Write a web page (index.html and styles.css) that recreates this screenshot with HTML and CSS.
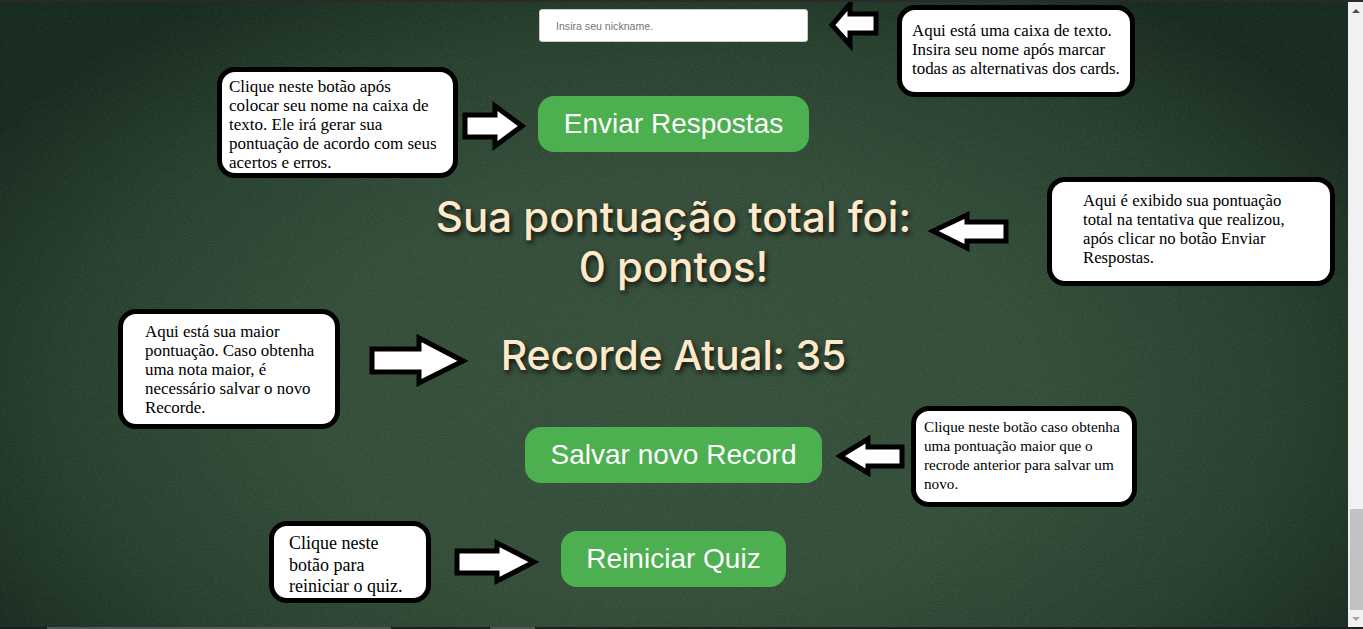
FILE: index.html
```html
<!DOCTYPE html>
<html>
<head>
	<title>Quiz - Pontuação</title>
	<link rel="stylesheet" href="styles.css">
</head>
<body>
	<div class="window">
		<main class="page">
			<svg class="grain" width="1348" height="627" aria-hidden="true">
				<filter id="noise">
					<feTurbulence type="fractalNoise" baseFrequency="0.9" numOctaves="2" seed="4"/>
					<feColorMatrix type="matrix" values="0 0 0 0 1  0 0 0 0 1  0 0 0 0 1  0.6 0.6 0 0 -0.5"/>
				</filter>
				<rect width="1348" height="627" filter="url(#noise)"/>
			</svg>

			<section class="quiz">
				<input class="nickname" type="text" placeholder="Insira seu nickname.">
				<button class="btn btn-send" type="button">Enviar Respostas</button>
				<h2 class="score">Sua pontuação total foi:<br>0 pontos!</h2>
				<h2 class="record">Recorde Atual: 35</h2>
				<button class="btn btn-save" type="button">Salvar novo Record</button>
				<button class="btn btn-restart" type="button">Reiniciar Quiz</button>
			</section>

			<!-- setas de ajuda -->
			<svg class="arrows" width="1348" height="627" aria-hidden="true">
				<polygon points="876,14 876,33 850,33 850,45 832,25 850,4 850,14"/>
				<polygon points="465,115 465,137 495,137 495,146 522,126 495,106 495,115"/>
				<polygon points="1006,222 1006,241 967,241 967,248 933,231 967,215 967,222"/>
				<polygon points="372,349 372,372 419,372 419,383 463,361 419,338 419,349"/>
				<polygon points="902,447 902,466 868,466 868,473 840,456 868,439 868,447"/>
				<polygon points="457,551 457,573 497,573 497,581 534,562 497,543 497,551"/>
			</svg>

			<!-- caixas de ajuda -->
			<p class="note note-input">Aqui está uma caixa de texto. Insira seu nome após marcar todas as alternativas dos cards.</p>
			<p class="note note-send">Clique neste botão após colocar seu nome na caixa de texto. Ele irá gerar sua pontuação de acordo com seus acertos e erros.</p>
			<p class="note note-score">Aqui é exibido sua pontuação total na tentativa que realizou, após clicar no botão Enviar Respostas.</p>
			<p class="note note-record">Aqui está sua maior pontuação. Caso obtenha uma nota maior, é necessário salvar o novo Recorde.</p>
			<p class="note note-save">Clique neste botão caso obtenha uma pontuação maior que o recrode anterior para salvar um novo.</p>
			<p class="note note-restart">Clique neste botão para reiniciar o quiz.</p>
		</main>

		<div class="scrollbar">
			<span class="scroll-up"></span>
			<span class="scroll-track"><span class="scroll-thumb"></span></span>
			<span class="scroll-down"></span>
		</div>
	</div>
	<div class="taskbar">
		<span class="taskbar-item taskbar-long"></span>
		<span class="taskbar-item taskbar-short"></span>
	</div>
</body>
</html>
```

FILE: styles.css
```css
html, body {
	margin: 0;
	height: 100%;
	overflow: hidden;
	background-color: #1e1e1e;
}

.window {
	position: relative;
	display: flex;
	height: 627px;
}

/* faixa escura no topo da captura */
.window::before {
	content: "";
	position: absolute;
	top: 0;
	left: 0;
	right: 0;
	height: 2px;
	background-color: #2a2a2a;
	z-index: 2;
}

.page {
	position: relative;
	flex: 1;
	overflow: hidden;
	background: radial-gradient(ellipse 60% 76% at 50% 62%, #364f3a 0%, #334c38 45%, #263f2c 75%, #16291d 100%);
}

.grain {
	position: absolute;
	top: 0;
	left: 0;
	opacity: 0.17;
}

.quiz {
	position: relative;
	display: flex;
	flex-direction: column;
	align-items: center;
	padding-top: 9px;
	padding-right: 1px;
}

.nickname {
	width: 269px;
	height: 33px;
	padding: 0 16px;
	box-sizing: border-box;
	background-color: #fff;
	border: 1px solid #ccc;
	border-radius: 3px;
	font-size: 10.6px;
	font-family: "Liberation Sans", Arial, sans-serif;
}

.nickname::placeholder {
	color: #757575;
}

.btn {
	height: 56px;
	padding: 0 26px;
	background-color: #4CAF50;
	color: #fff;
	border: none;
	border-radius: 16px;
	font-size: 28px;
	font-family: "Liberation Sans", Arial, sans-serif;
	cursor: pointer;
}

.btn-send {
	margin-top: 54px;
}

.btn-save {
	margin-top: 47px;
}

.btn-restart {
	margin-top: 48px;
	padding: 0 25px;
}

.score, .record {
	margin: 0;
	color: #ffe9c9;
	font-family: Inter, "Open Sans", sans-serif;
	font-weight: 500;
	text-align: center;
	text-shadow: 2px 3px 5px rgba(0, 0, 0, 0.75);
}

.score {
	margin-top: 40px;
	font-size: 42px;
	line-height: 50px;
}

.record {
	margin-top: 38px;
	font-size: 41px;
	line-height: 50px;
	letter-spacing: -0.2px;
}

.arrows {
	position: absolute;
	top: 0;
	left: 0;
}

.arrows polygon {
	fill: #fff;
	stroke: #000;
	stroke-width: 5;
	stroke-linejoin: miter;
}

.note {
	position: absolute;
	margin: 0;
	box-sizing: border-box;
	background-color: #fff;
	border: 5px solid #000;
	border-radius: 18px;
	color: #000;
	font-family: "Liberation Serif", "Times New Roman", serif;
	font-size: 16.7px;
	line-height: 19px;
}

.note-input {
	top: 5px;
	left: 897px;
	width: 238px;
	height: 92px;
	padding: 11px 8px 0 10px;
	font-size: 16.9px;
}

.note-send {
	top: 67px;
	left: 217px;
	width: 241px;
	height: 111px;
	padding: 5px 10px 0 7px;
	font-size: 17px;
}

.note-score {
	top: 177px;
	left: 1047px;
	width: 288px;
	height: 109px;
	padding: 9px 30px 0 31px;
}

.note-record {
	top: 309px;
	left: 118px;
	width: 222px;
	height: 120px;
	padding: 8px 12px 0 22px;
	font-size: 16.9px;
}

.note-save {
	top: 406px;
	left: 911px;
	width: 226px;
	height: 101px;
	padding: 6px 8px 0 8px;
	font-size: 15.2px;
}

.note-restart {
	top: 521px;
	left: 269px;
	width: 162px;
	height: 82px;
	padding: 7px 18px 0 15px;
	font-size: 18px;
	line-height: 21.5px;
}

/* barra de rolagem */
.scrollbar {
	display: flex;
	flex-direction: column;
	width: 15px;
	background-color: #f1f1f1;
}

.scroll-up, .scroll-down {
	height: 17px;
	display: flex;
	align-items: center;
	justify-content: center;
}

.scroll-up {
	height: 22px;
}

.scroll-up::before, .scroll-down::before {
	content: "";
	border-left: 4px solid transparent;
	border-right: 4px solid transparent;
}

.scroll-up::before {
	border-bottom: 4px solid #505050;
}

.scroll-down::before {
	border-top: 4px solid #a3a3a3;
}

.scroll-track {
	flex: 1;
	display: flex;
	flex-direction: column;
	justify-content: flex-end;
}

.scroll-thumb {
	height: 101px;
	margin-left: 2px;
	background-color: #c1c1c1;
}

.taskbar {
	display: flex;
	height: 2px;
	background-color: #1e1e1e;
}

.taskbar-item {
	height: 2px;
	background-color: #555;
}

.taskbar-long {
	width: 344px;
	margin-left: 47px;
}

.taskbar-short {
	width: 45px;
	margin-left: 99px;
}
```
